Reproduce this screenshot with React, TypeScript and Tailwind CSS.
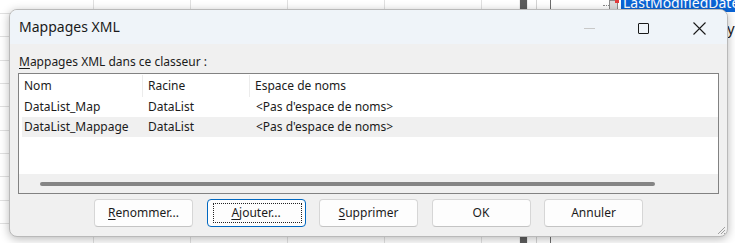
import React from "react";

const font = { fontFamily: '"Noto Sans", "Open Sans", sans-serif' };

function Btn({ children, focused }: { children: React.ReactNode; focused?: boolean }) {
  return (
    <div
      className={
        "relative w-[99px] h-[28px] flex items-center justify-center rounded-[4px] bg-[#fdfdfd] text-[12px] text-[#1b1b1b] " +
        (focused ? "border border-[#0067c0]" : "border border-[#d6d6d6] border-b-[#c4c4c4]")
      }
    >
      {focused && <div className="absolute left-[5px] right-[3px] top-[3px] bottom-[3px] border border-dotted border-[#222]" />}
      <span>{children}</span>
    </div>
  );
}

export default function App() {
  const rowLines = [13, 36, 60, 83, 106, 130, 153, 176, 200, 223];
  const colLines = [93, 190, 287, 384, 481];
  return (
    <div className="relative w-[735px] h-[243px] overflow-hidden bg-white" style={font}>
      {/* background sheet */}
      {rowLines.map((y) => (
        <div key={"r" + y} className="absolute left-0 w-[519px] h-px bg-[#e1e1e1]" style={{ top: y }} />
      ))}
      {colLines.map((x) => (
        <div key={"c" + x} className="absolute top-0 bottom-0 w-px bg-[#e1e1e1]" style={{ left: x }} />
      ))}
      <div className="absolute left-[519px] top-0 bottom-0 w-[9px] bg-[#f0f0f0]" />
      <div className="absolute left-[520px] top-0 w-[7px] h-[12px] bg-[#5d5d5d]" />
      <div className="absolute left-[520px] bottom-0 w-[7px] h-[8px] bg-[#5d5d5d]" />
      <div className="absolute left-[536px] top-0 bottom-0 w-px bg-[#d4d4d4]" />
      <div className="absolute left-[550px] top-0 bottom-0 w-px bg-[#6d6d6d]" />
      {/* xml source tree item */}
      <div className="absolute left-[603px] top-[5px] w-[6px] border-t border-dotted border-[#888]" />
      <div className="absolute left-[609px] top-[0px] w-[9px] h-[10px] bg-[#dcdcdc] border border-[#8a8a8a]" />
      <div className="absolute left-[615px] top-[0px] w-[4px] h-[3px] bg-[#e23b3b]" />
      <div className="absolute left-[621px] top-[-6px] h-[18px] w-[120px] bg-[#0a64d6] text-white text-[14px] leading-[18px] pl-[2px] whitespace-nowrap">
        LastModifiedDate
      </div>
      <div className="absolute left-[727px] top-[18px] text-[15px] leading-[20px] text-[#222] whitespace-nowrap">ype</div>

      {/* dialog */}
      <div className="absolute left-[9px] top-[9px] w-[719px] h-[228px] rounded-[8px] border border-[#b9b9b9] bg-[#f0f0f0] overflow-hidden shadow-[0_2px_10px_rgba(0,0,0,0.28)] flex flex-col">
        <div className="h-[34px] shrink-0 bg-[#eff4f9] flex items-center">
          <div className="pl-[9px] text-[14px] text-[#1a1a1a] leading-[20px]">Mappages XML</div>
          <div className="ml-auto flex items-center h-full">
            <div className="w-[46px] h-full flex items-center justify-center">
              <div className="w-[11px] h-px bg-[#c8c8c8] mt-[2px]" />
            </div>
            <div className="w-[56px] h-full flex items-center justify-center ml-[3px]">
              <div className="w-[11px] h-[11px] border border-[#1a1a1a] rounded-[1px] mt-[2px]" />
            </div>
            <div className="w-[56px] h-full flex items-center justify-center">
              <svg width="13" height="13" viewBox="0 0 13 13" className="mt-[2px]">
                <path d="M0.5 0.5 L12.5 12.5 M12.5 0.5 L0.5 12.5" stroke="#1a1a1a" strokeWidth="1.1" fill="none" />
              </svg>
            </div>
          </div>
        </div>
        <div className="flex-1 flex flex-col px-[8px] pt-[10px]">
          <div className="pl-[1px] h-[16px] text-[12px] leading-[16px] text-[#1b1b1b]">
            <span className="underline underline-offset-2">M</span>appages XML dans ce classeur :
          </div>
          <div className="mt-[3px] h-[121px] border border-[#828282] bg-white flex flex-col text-[12px] text-[#1b1b1b]">
            <div className="h-[23px] flex items-center">
              <div className="w-[123px] h-full flex items-center pl-[5px]">Nom</div>
              <div className="w-px h-[22px] bg-[#ececec]" />
              <div className="w-[106px] h-full flex items-center pl-[5px]">Racine</div>
              <div className="w-px h-[22px] bg-[#ececec]" />
              <div className="flex-1 h-full flex items-center pl-[5px]">Espace de noms</div>
            </div>
            <div className="h-[20px] flex items-center">
              <div className="w-[124px] pl-[5px]">DataList_Map</div>
              <div className="w-[107px] pl-[5px]">DataList</div>
              <div className="flex-1 pl-[6px]">&lt;Pas d'espace de noms&gt;</div>
            </div>
            <div className="h-[20px] flex items-center bg-[#f0f0f0] ml-[3px]">
              <div className="w-[121px] pl-[2px]">DataList_Mappage</div>
              <div className="w-[107px] pl-[5px]">DataList</div>
              <div className="flex-1 pl-[6px]">&lt;Pas d'espace de noms&gt;</div>
            </div>
            <div className="flex-1" />
            <div className="h-[19px] bg-[#f0f0f0] flex items-center">
              <div className="ml-[21px] w-[615px] h-[4px] rounded-full bg-[#858585] mt-[1px]" />
            </div>
          </div>
          <div className="mt-[5px] flex justify-center gap-[13.5px]">
            <Btn>
              <span className="underline underline-offset-2">R</span>enommer...
            </Btn>
            <Btn focused>
              <span className="underline underline-offset-2">A</span>jouter...
            </Btn>
            <Btn>
              <span className="underline underline-offset-2">S</span>upprimer
            </Btn>
            <Btn>OK</Btn>
            <Btn>Annuler</Btn>
          </div>
        </div>
        {/* resize grip */}
        <svg width="10" height="10" viewBox="0 0 10 10" className="absolute right-[1px] bottom-[1px]">
          <path d="M9 2 L2 9 M9 5 L5 9 M9 8 L8 9" stroke="#a0a0a0" strokeWidth="1" fill="none" />
        </svg>
      </div>
    </div>
  );
}
